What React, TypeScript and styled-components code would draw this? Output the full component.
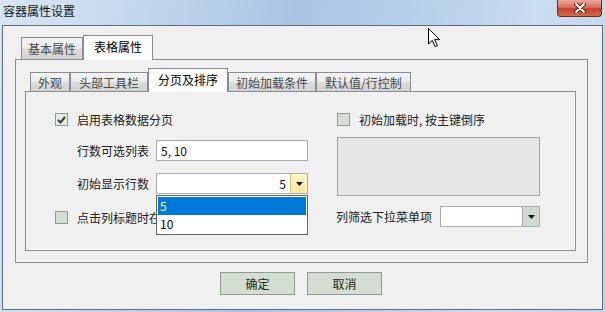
import React from 'react';
import styled, { createGlobalStyle } from 'styled-components';

const GlobalStyle = createGlobalStyle`
  html, body { margin: 0; padding: 0; }
  body {
    font-family: "Noto Sans CJK SC", "Noto Sans", sans-serif;
    font-size: 12px;
    color: #1e1e1e;
  }
`;

const Window = styled.div`
  position: relative;
  width: 605px;
  height: 312px;
  box-sizing: border-box;
  padding: 0 2px 2px 2px;
  display: flex;
  flex-direction: column;
  overflow: hidden;
  background: linear-gradient(100deg, #d7e5f4 0%, #c3d7ed 22%, #aac4e3 45%, #b6cee9 62%, #cadcf0 82%, #bfd4ec 100%);
`;

const TitleBar = styled.div`
  height: 25px;
  flex: none;
  display: flex;
  align-items: flex-start;
  justify-content: space-between;
`;

const Title = styled.div`
  padding-left: 1px;
  line-height: 22px;
  font-size: 12px;
  color: #141414;
`;

const CloseButton = styled.div`
  width: 45px;
  height: 17px;
  margin-right: 1px;
  box-sizing: border-box;
  border: 1px solid #6e2a20;
  border-top: none;
  border-radius: 0 0 4px 4px;
  background: linear-gradient(#e9a797 0%, #d9735e 45%, #c4412a 55%, #d5694c 100%);
  display: flex;
  align-items: center;
  justify-content: center;
`;

const Client = styled.div`
  flex: 1;
  border: 1px solid #5e6d7c;
  background: #f0f0f0;
  padding-top: 9px;
  display: flex;
  flex-direction: column;
`;

const TabWidget = styled.div<{ $width: number; $ml: number }>`
  width: ${p => p.$width}px;
  margin-left: ${p => p.$ml}px;
  display: flex;
  flex-direction: column;
`;

const TabStrip = styled.div<{ $h: number; $pl: number }>`
  height: ${p => p.$h}px;
  padding-left: ${p => p.$pl}px;
  display: flex;
  align-items: flex-end;
`;

const Tab = styled.div<{ $active?: boolean; $h: number; $px?: number }>`
  position: relative;
  z-index: ${p => (p.$active ? 2 : 0)};
  height: ${p => p.$h}px;
  margin-bottom: ${p => (p.$active ? -1 : 0)}px;
  box-sizing: border-box;
  padding: 0 ${p => p.$px ?? (p.$active ? 10 : 8)}px ${p => (p.$active ? 3 : 0)}px;
  border: 1px solid #898c95;
  border-bottom: none;
  display: flex;
  align-items: center;
  white-space: nowrap;
  font-size: 12px;
  color: ${p => (p.$active ? '#000' : '#4a4a4a')};
  background: ${p => (p.$active ? '#fcfcfc' : 'linear-gradient(#f4f4f4 0%, #ebebeb 48%, #dcdcdc 52%, #d2d2d2 100%)')};
`;

const OuterPanel = styled.div`
  height: 204px;
  box-sizing: border-box;
  border: 1px solid #898c95;
  background: #f0f0f0;
  padding: 8px 11px 11px 9px;
`;

const InnerPanel = styled.div`
  height: 160px;
  box-sizing: border-box;
  border: 1px solid #898c95;
  box-shadow: inset -1px -1px 0 #ffffff;
  background: #f0f0f0;
  padding: 21px 0 0 29px;
  display: flex;
`;

const Column = styled.div<{ $width?: number }>`
  ${p => (p.$width ? `width: ${p.$width}px;` : 'flex: 1;')}
  display: flex;
  flex-direction: column;
`;

const CheckRow = styled.div<{ $mt?: number }>`
  margin-top: ${p => p.$mt || 0}px;
  height: 13px;
  display: flex;
  align-items: center;
  gap: 9px;
  white-space: nowrap;
  color: #222;
`;

const ClippedLabel = styled.div<{ $width: number }>`
  width: ${p => p.$width}px;
  overflow: hidden;
`;

const CheckBox = styled.div<{ $checked?: boolean }>`
  width: 13px;
  height: 13px;
  flex: none;
  box-sizing: border-box;
  border: 1px solid #8d9c8d;
  background: ${p => (p.$checked ? '#e3ebe3' : '#d3dfd3')};
  display: flex;
  align-items: center;
  justify-content: center;
`;

const FieldRow = styled.div<{ $mt: number; $ml?: number }>`
  margin-top: ${p => p.$mt}px;
  margin-left: ${p => p.$ml || 0}px;
  display: flex;
  align-items: center;
  white-space: nowrap;
  color: #222;
`;

const FieldLabel = styled.div<{ $width: number }>`
  width: ${p => p.$width}px;
  flex: none;
`;

const TextInput = styled.div`
  width: 152px;
  height: 21px;
  box-sizing: border-box;
  border: 1px solid #a9acb3;
  background: #fff;
  padding-left: 4px;
  line-height: 19px;
  color: #111;
`;

const Combo = styled.div<{ $width: number }>`
  position: relative;
  width: ${p => p.$width}px;
  height: 21px;
  box-sizing: border-box;
  border: 1px solid #a9acb3;
  background: #fff;
  display: flex;
`;

const ComboValue = styled.div`
  flex: 1;
  text-align: right;
  padding-right: 4px;
  line-height: 19px;
  color: #111;
`;

const DropButton = styled.div<{ $hover?: boolean }>`
  width: 17px;
  flex: none;
  box-sizing: border-box;
  border-left: 1px solid ${p => (p.$hover ? '#e0c36a' : '#a3ada3')};
  background: ${p => (p.$hover ? 'linear-gradient(#fff6cc, #fde99c)' : '#cfdbcf')};
  display: flex;
  align-items: center;
  justify-content: center;
`;

const DropList = styled.div`
  position: absolute;
  z-index: 5;
  left: -1px;
  top: calc(100% + 2px);
  width: 152px;
  box-sizing: border-box;
  border: 1px solid #646464;
  background: #fff;
  padding: 1px;
`;

const DropItem = styled.div<{ $selected?: boolean }>`
  height: 18px;
  line-height: 18px;
  padding-left: 2px;
  color: ${p => (p.$selected ? '#fff' : '#000')};
  background: ${p => (p.$selected ? '#0078d7' : 'transparent')};
`;

const DisabledBox = styled.div`
  margin-top: 11px;
  width: 203px;
  height: 59px;
  box-sizing: border-box;
  border: 1px solid #a5a5a5;
  background: #e6e6e8;
`;

const ButtonRow = styled.div`
  margin-top: 9px;
  padding-right: 3px;
  display: flex;
  justify-content: center;
  gap: 12px;
`;

const Button = styled.div`
  width: 75px;
  height: 23px;
  box-sizing: border-box;
  border: 1px solid #8e9d8c;
  background: #d3ddd1;
  display: flex;
  align-items: center;
  justify-content: center;
  font-size: 12px;
  color: #1b281b;
`;

const Cursor = styled.svg`
  position: absolute;
  left: 428px;
  top: 28px;
`;

const Arrow = () => (
  <svg width="7" height="4" viewBox="0 0 7 4">
    <path d="M0 0 H7 L3.5 4 Z" fill="#111" />
  </svg>
);

const Check = () => (
  <svg width="9" height="8" viewBox="0 0 9 8">
    <path d="M1 4 L3.5 6.5 L8 1" fill="none" stroke="#2b4a2b" strokeWidth="2" />
  </svg>
);

export default function App() {
  return (
    <Window>
      <GlobalStyle />
      <TitleBar>
        <Title>容器属性设置</Title>
        <CloseButton>
          <svg width="12" height="10" viewBox="0 0 12 10">
            <path d="M2 1 L10 9 M10 1 L2 9" stroke="#5a1d14" strokeWidth="4" strokeLinecap="round" />
            <path d="M2 1 L10 9 M10 1 L2 9" stroke="#ffffff" strokeWidth="2" strokeLinecap="round" />
          </svg>
        </CloseButton>
      </TitleBar>
      <Client>
        <TabWidget $width={573} $ml={12}>
          <TabStrip $h={24} $pl={6}>
            <Tab $h={22} $px={6}>基本属性</Tab>
            <Tab $h={25} $active>表格属性</Tab>
          </TabStrip>
          <OuterPanel>
            <TabWidget $width={551} $ml={0}>
              <TabStrip $h={23} $pl={5}>
                <Tab $h={19} $px={7}>外观</Tab>
                <Tab $h={19}>头部工具栏</Tab>
                <Tab $h={24} $active $px={9}>分页及排序</Tab>
                <Tab $h={19} $px={7}>初始加载条件</Tab>
                <Tab $h={19}>默认值/行控制</Tab>
              </TabStrip>
              <InnerPanel>
                <Column $width={282}>
                  <CheckRow>
                    <CheckBox $checked><Check /></CheckBox>
                    启用表格数据分页
                  </CheckRow>
                  <FieldRow $mt={14} $ml={22}>
                    <FieldLabel $width={79}>行数可选列表</FieldLabel>
                    <TextInput>5, 10</TextInput>
                  </FieldRow>
                  <FieldRow $mt={12} $ml={22}>
                    <FieldLabel $width={79}>初始显示行数</FieldLabel>
                    <Combo $width={152}>
                      <ComboValue>5</ComboValue>
                      <DropButton $hover><Arrow /></DropButton>
                      <DropList>
                        <DropItem $selected>5</DropItem>
                        <DropItem>10</DropItem>
                      </DropList>
                    </Combo>
                  </FieldRow>
                  <CheckRow $mt={17}>
                    <CheckBox />
                    <ClippedLabel $width={79}>点击列标题时在客户端排序</ClippedLabel>
                  </CheckRow>
                </Column>
                <Column>
                  <CheckRow>
                    <CheckBox />
                    初始加载时, 按主键倒序
                  </CheckRow>
                  <DisabledBox />
                  <FieldRow $mt={10} $ml={-1}>
                    <FieldLabel $width={104}>列筛选下拉菜单项</FieldLabel>
                    <Combo $width={100}>
                      <ComboValue />
                      <DropButton><Arrow /></DropButton>
                    </Combo>
                  </FieldRow>
                </Column>
              </InnerPanel>
            </TabWidget>
          </OuterPanel>
        </TabWidget>
        <ButtonRow>
          <Button>确定</Button>
          <Button>取消</Button>
        </ButtonRow>
      </Client>
      <Cursor width="13" height="20" viewBox="0 0 13 20">
        <path d="M0.5 0.5 V16 L4.3 12.3 L7 18.6 L9.3 17.6 L6.7 11.6 H11.6 Z" fill="#fff" stroke="#000" strokeWidth="1" />
      </Cursor>
    </Window>
  );
}
